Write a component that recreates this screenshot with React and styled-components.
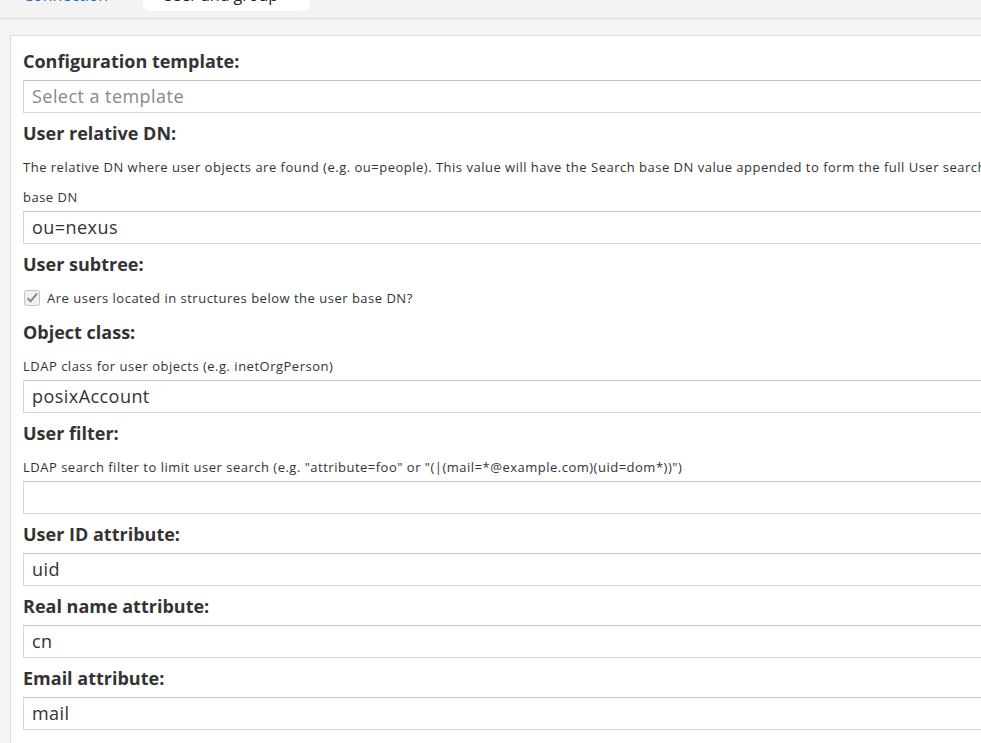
import React from 'react'
import styled, { createGlobalStyle } from 'styled-components'

const GlobalStyle = createGlobalStyle`
  html, body {
    margin: 0;
    padding: 0;
    background: #f4f4f4;
    font-family: "Open Sans", "Liberation Sans", Arial, sans-serif;
    color: #333;
    overflow: hidden;
  }
`

const fields = [
  { label: 'Configuration template:', placeholder: 'Select a template' },
  {
    label: 'User relative DN:',
    help: 'The relative DN where user objects are found (e.g. ou=people). This value will have the Search base DN value appended to form the full User search base DN',
    value: 'ou=nexus',
  },
  {
    label: 'User subtree:',
    checkbox: 'Are users located in structures below the user base DN?',
  },
  {
    label: 'Object class:',
    help: 'LDAP class for user objects (e.g. inetOrgPerson)',
    value: 'posixAccount',
  },
  {
    label: 'User filter:',
    help: 'LDAP search filter to limit user search (e.g. "attribute=foo" or "(|(mail=*@example.com)(uid=dom*))")',
    value: '',
  },
  { label: 'User ID attribute:', value: 'uid' },
  { label: 'Real name attribute:', value: 'cn' },
  { label: 'Email attribute:', value: 'mail' },
]

function CheckIcon() {
  return (
    <svg width="16" height="16" viewBox="0 0 16 16">
      <rect x="0.5" y="0.5" width="15" height="15" rx="2" fill="#f0f0f0" stroke="#c4c4c4" />
      <path d="M3.5 8.2 L6.6 11.2 L13 3.6" fill="none" stroke="#8a8a8a" strokeWidth="2" />
    </svg>
  )
}

function App() {
  return (
    <Page>
      <GlobalStyle />
      <TabBar>
        <Tab width="143px">Connection</Tab>
        <Tab active width="167px">User and group</Tab>
      </TabBar>
      <Body>
        <Panel>
          {fields.map((f) => (
            <Field key={f.label}>
              <Label>{f.label}</Label>
              {f.help && <Help>{f.help}</Help>}
              {f.checkbox ? (
                <CheckRow>
                  <CheckIcon />
                  <span>{f.checkbox}</span>
                </CheckRow>
              ) : (
                <Input empty={!f.value}>{f.value || f.placeholder || '\u00a0'}</Input>
              )}
            </Field>
          ))}
        </Panel>
      </Body>
    </Page>
  )
}

export default App

const Page = styled.div`
  width: 981px;
  height: 743px;
  overflow: hidden;
`
const TabBar = styled.div`
  display: flex;
  align-items: flex-start;
  margin-top: -26px;
  height: 45px;
  border-bottom: 1px solid #dcdcdc;
  background: #f3f3f3;
  box-sizing: border-box;
`
const Tab = styled.div`
  box-sizing: border-box;
  width: ${(p) => p.width};
  font-size: 16px;
  line-height: 20px;
  padding: 11px 0 6px ${(p) => (p.active ? '19px' : '23px')};
  border-radius: 0 0 7px 7px;
  color: ${(p) => (p.active ? '#222' : '#0b6fc7')};
  background: ${(p) => (p.active ? '#fff' : 'transparent')};
  white-space: nowrap;
`
const Body = styled.div`
  padding: 16px 0 0 10px;
`
const Panel = styled.div`
  background: #fff;
  border-top: 1px solid #dcdcdc;
  border-left: 1px solid #dcdcdc;
  padding: 14px 0 0 12px;
  height: 800px;
`
const Field = styled.div`
  margin-bottom: 9px;
`
const Label = styled.div`
  font-size: 18px;
  font-weight: bold;
  line-height: 22px;
  color: #333;
  margin-bottom: 8px;
`
const Help = styled.div`
  font-size: 13px;
  letter-spacing: 0.5px;
  line-height: 30px;
  margin-bottom: -1px;
  color: #333;
  width: 985px;
`
const Input = styled.div`
  height: 33px;
  box-sizing: border-box;
  border: 1px solid #d6d6d6;
  border-top-color: #c4c4c4;
  border-right: none;
  padding: 0 8px;
  font-size: 18px;
  letter-spacing: 0.45px;
  line-height: 31px;
  color: ${(p) => (p.empty ? '#888' : '#333')};
`
const CheckRow = styled.div`
  display: flex;
  align-items: center;
  gap: 7px;
  height: 30px;
  margin-top: 2px;
  margin-bottom: -1px;
  font-size: 13px;
  letter-spacing: 0.5px;
  padding-left: 1px;
`
